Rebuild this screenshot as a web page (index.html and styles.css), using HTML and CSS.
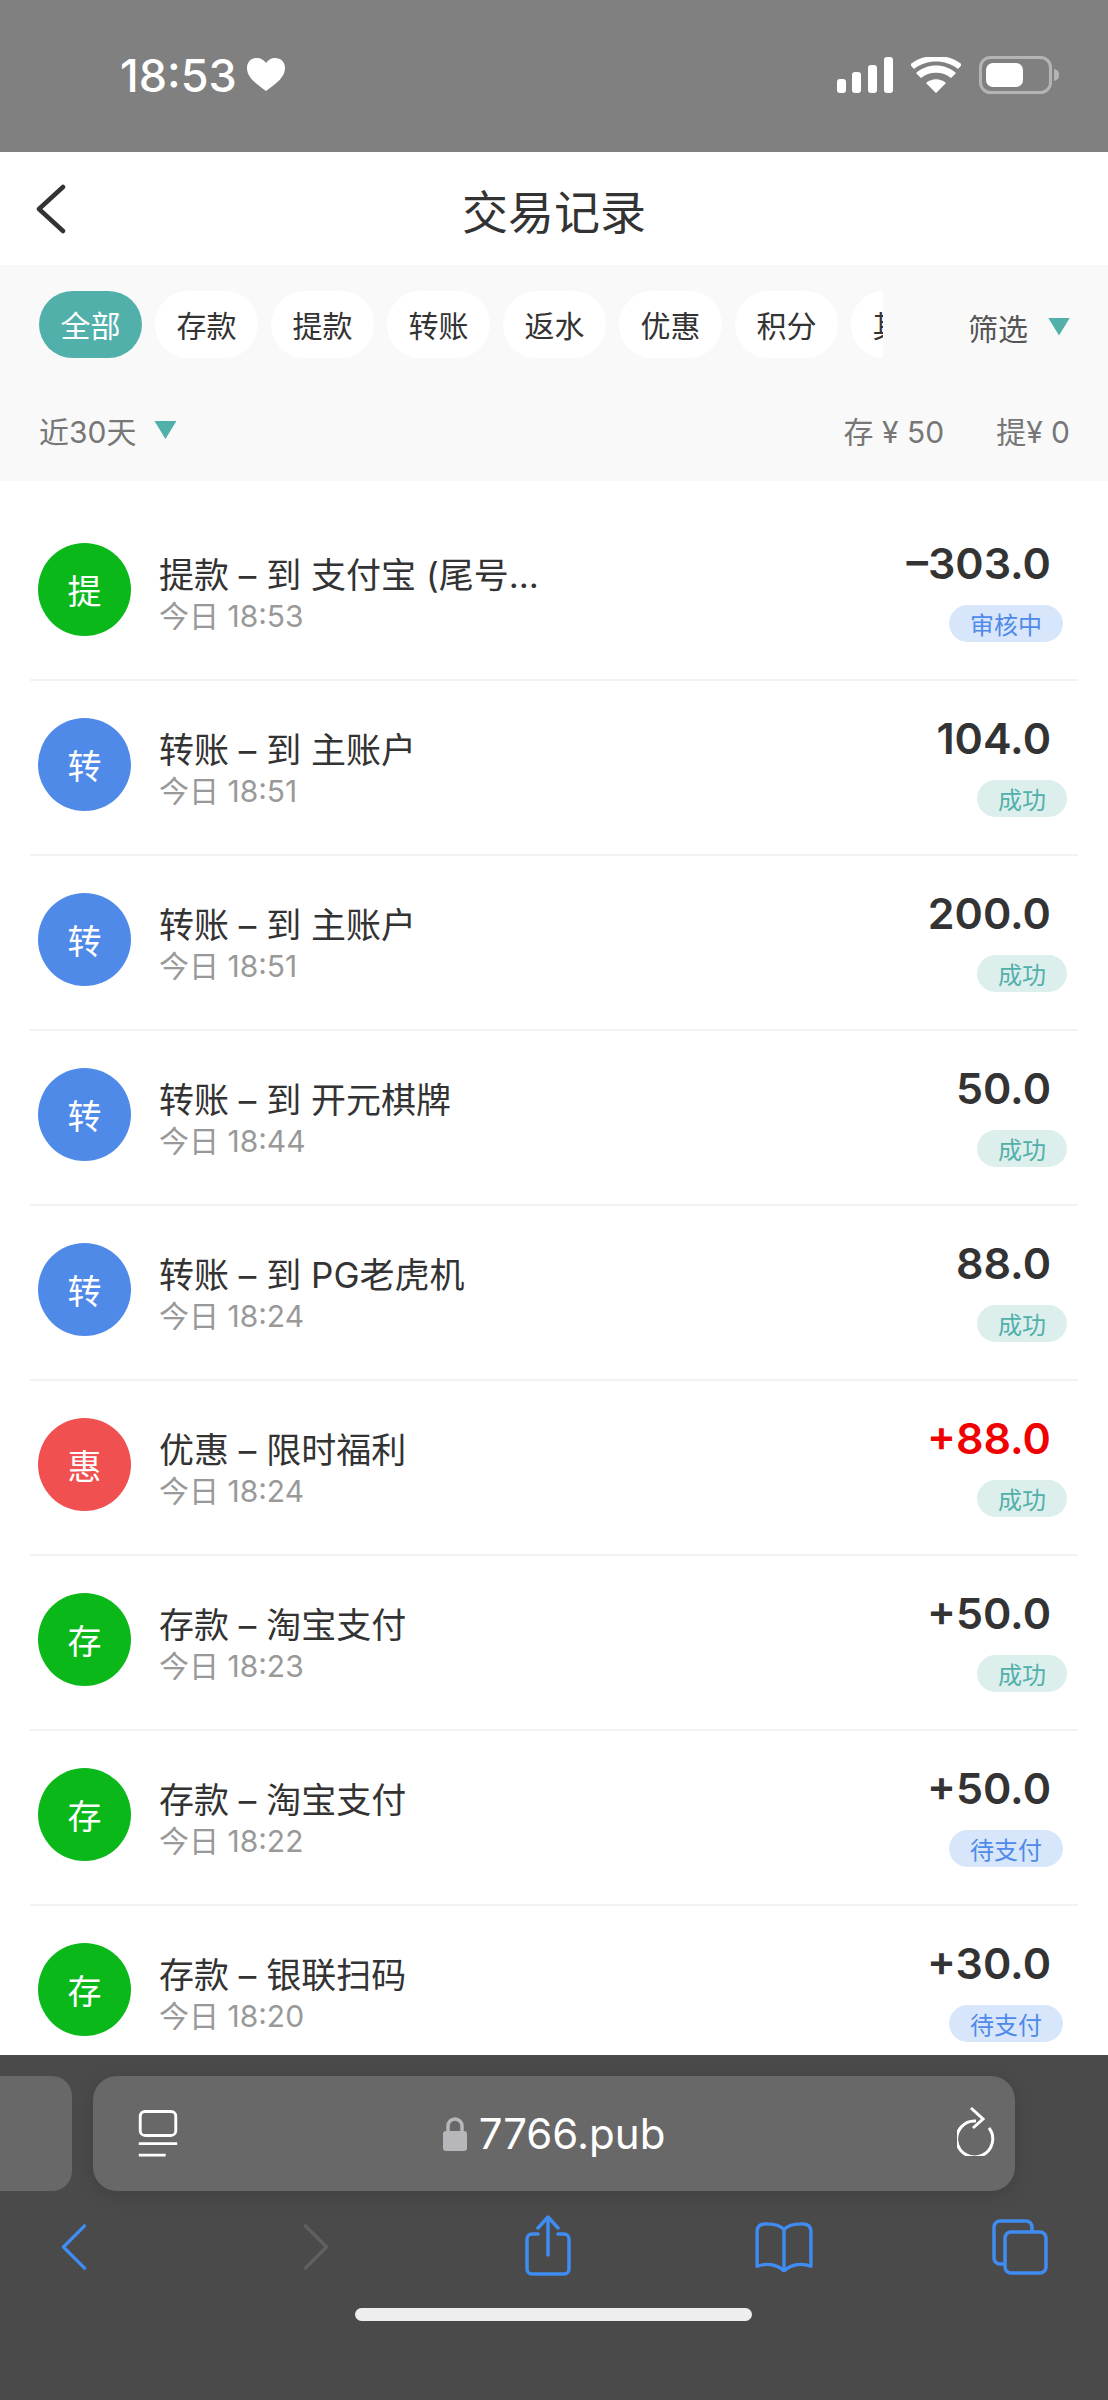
FILE: index.html
```html
<!DOCTYPE html>
<html lang="zh-CN">
<head>
<meta charset="utf-8">
<title>交易记录</title>
<link rel="stylesheet" href="styles.css">
</head>
<body>
<div class="screen">
  <header class="status">
    <div class="clock"><span>18:53</span>
      <svg class="heart" viewBox="0 0 38 34"><path d="M19 33C8 25 0 19 0 10 0 4 4 0 10 0c4 0 7 2 9 5 2-3 5-5 9-5 6 0 10 4 10 10 0 9-8 15-19 23z"/></svg>
    </div>
    <div class="status-icons">
      <svg class="signal" viewBox="0 0 56 36"><rect x="0" y="22" width="9" height="14" rx="3"/><rect x="15" y="15" width="9" height="21" rx="3"/><rect x="31" y="8" width="9" height="28" rx="3"/><rect x="47" y="0" width="9" height="36" rx="3"/></svg>
      <svg class="wifi" viewBox="0 0 50 36"><path d="M25 36 15 26c6-5 14-5 20 0zM10 21 5 16c11-10 29-10 40 0l-5 5c-8-7-22-7-30 0z"/><path d="M3 12-1 7.500C13-4 37-4 51 7.500L47 12C35 2 15 2 3 12z"/></svg>
      <svg class="battery" viewBox="0 0 82 38"><rect x="1.500" y="1.500" width="70" height="35" rx="10" fill="none" stroke="#b4b4b4" stroke-width="3"/><rect x="7" y="7" width="37" height="24" rx="7" fill="#fff"/><path d="M75 13c4 1 5 3 5 6s-1 5-5 6z" fill="#b4b4b4"/></svg>
    </div>
  </header>

  <nav class="title-bar">
    <svg class="back" viewBox="0 0 32 50"><path d="M29 3 5 25l24 22" transform="translate(0 0)"/></svg>
    <h1>交易记录</h1>
  </nav>

  <section class="filters">
    <div class="tab-row">
      <div class="tabs">
        <span class="tab tab-on">全部</span>
        <span class="tab">存款</span>
        <span class="tab">提款</span>
        <span class="tab">转账</span>
        <span class="tab">返水</span>
        <span class="tab">优惠</span>
        <span class="tab">积分</span>
        <span class="tab">其他</span>
      </div>
      <div class="picker"><span>筛选</span><i class="caret"></i></div>
    </div>
    <div class="summary">
      <div class="range"><span>近30天</span><i class="caret"></i></div>
      <div class="totals"><span>存 ¥ 50</span><span>提¥ 0</span></div>
    </div>
  </section>

  <main class="records">
    <article class="row">
      <span class="avatar green">提</span>
      <div class="info"><p class="name">提款 – 到 支付宝 (尾号...</p><p class="when">今日 18:53</p></div>
      <div class="money"><b>–303.0</b><span class="badge wait">审核中</span></div>
    </article>
    <article class="row">
      <span class="avatar blue">转</span>
      <div class="info"><p class="name">转账 – 到 主账户</p><p class="when">今日 18:51</p></div>
      <div class="money"><b>104.0</b><span class="badge ok">成功</span></div>
    </article>
    <article class="row">
      <span class="avatar blue">转</span>
      <div class="info"><p class="name">转账 – 到 主账户</p><p class="when">今日 18:51</p></div>
      <div class="money"><b>200.0</b><span class="badge ok">成功</span></div>
    </article>
    <article class="row">
      <span class="avatar blue">转</span>
      <div class="info"><p class="name">转账 – 到 开元棋牌</p><p class="when">今日 18:44</p></div>
      <div class="money"><b>50.0</b><span class="badge ok">成功</span></div>
    </article>
    <article class="row">
      <span class="avatar blue">转</span>
      <div class="info"><p class="name">转账 – 到 PG老虎机</p><p class="when">今日 18:24</p></div>
      <div class="money"><b>88.0</b><span class="badge ok">成功</span></div>
    </article>
    <article class="row">
      <span class="avatar red">惠</span>
      <div class="info"><p class="name">优惠 – 限时福利</p><p class="when">今日 18:24</p></div>
      <div class="money"><b class="gain">+88.0</b><span class="badge ok">成功</span></div>
    </article>
    <article class="row">
      <span class="avatar green">存</span>
      <div class="info"><p class="name">存款 – 淘宝支付</p><p class="when">今日 18:23</p></div>
      <div class="money"><b>+50.0</b><span class="badge ok">成功</span></div>
    </article>
    <article class="row">
      <span class="avatar green">存</span>
      <div class="info"><p class="name">存款 – 淘宝支付</p><p class="when">今日 18:22</p></div>
      <div class="money"><b>+50.0</b><span class="badge wait">待支付</span></div>
    </article>
    <article class="row">
      <span class="avatar green">存</span>
      <div class="info"><p class="name">存款 – 银联扫码</p><p class="when">今日 18:20</p></div>
      <div class="money"><b>+30.0</b><span class="badge wait">待支付</span></div>
    </article>
  </main>

  <footer class="browser">
    <div class="url-row">
      <div class="prev-tab"></div>
      <div class="url-bar">
        <svg class="reader" viewBox="0 0 40 50"><rect x="1.500" y="1.500" width="37" height="25" rx="5"/><path d="M0 35h40M0 47h28"/></svg>
        <div class="address">
          <svg class="lock" viewBox="0 0 24 34"><path class="lock-body" d="M3 14h18a3 3 0 0 1 3 3v14a3 3 0 0 1-3 3H3a3 3 0 0 1-3-3V17a3 3 0 0 1 3-3z"/><path class="lock-arc" d="M5 15V9a7 7 0 0 1 14 0v6"/></svg>
          <span>7766.pub</span>
        </div>
        <svg class="reload" viewBox="0 0 40 50"><path d="M32 22a18 18 0 1 1-13-7"/><path d="M14 2l12 11-10 9"/></svg>
      </div>
    </div>
    <div class="tools">
      <svg class="tool t-back" viewBox="0 0 28 50"><path d="M25 3 3 25l0 0 22 22"/></svg>
      <svg class="tool t-next" viewBox="0 0 28 50"><path d="M3 3l22 22L3 47"/></svg>
      <svg class="tool t-share" viewBox="0 0 48 62"><path d="M14 19H8a5 5 0 0 0-5 5v30a5 5 0 0 0 5 5h32a5 5 0 0 0 5-5V24a5 5 0 0 0-5-5h-6"/><path d="M24 40V3M14 13 24 2l10 11"/></svg>
      <svg class="tool t-book" viewBox="0 0 62 52"><path d="M31 8C27 3 20 2 12 2 6 2 3 5 3 10v36c8-3 20-3 28 5 8-8 20-8 28-5V10c0-5-3-8-9-8-8 0-15 1-19 6zM31 8v43"/></svg>
      <svg class="tool t-tabs" viewBox="0 0 58 58"><path d="M12 46H9a6 6 0 0 1-6-6V9a6 6 0 0 1 6-6h26a6 6 0 0 1 6 6v4"/><rect x="14" y="14" width="41" height="41" rx="6"/></svg>
    </div>
    <div class="home-bar"></div>
  </footer>
</div>
</body>
</html>
```
FILE: styles.css
```css
* { box-sizing: border-box; }
html, body { margin: 0; padding: 0; }
body {
  width: 1108px;
  height: 2400px;
  overflow: hidden;
  background: #fff;
  font-family: "Noto Sans CJK SC", "Noto Sans", sans-serif;
  color: #333;
}
p, h1 { margin: 0; font-weight: 400; }
.screen { width: 1108px; height: 2400px; display: flex; flex-direction: column; overflow: hidden; }

/* status bar */
.status {
  flex: none;
  height: 152px;
  background: #808080;
  display: flex;
  justify-content: space-between;
  align-items: flex-start;
  padding: 52px 47px 0 120px;
  color: #fff;
}
.clock { display: flex; align-items: center; gap: 10px; font: 500 45px/1 Inter, sans-serif; height: 46px; }
.heart { width: 38px; height: 34px; fill: #fff; }
.status-icons { display: flex; align-items: center; gap: 18px; height: 46px; }
.signal { width: 56px; height: 36px; fill: #fff; }
.wifi { width: 50px; height: 36px; fill: #fff; }
.battery { width: 82px; height: 38px; }

/* page title */
.title-bar {
  flex: none;
  height: 113px;
  display: flex;
  align-items: center;
  justify-content: center;
  position: relative;
}
.title-bar h1 { font-size: 46px; line-height: 1; color: #333; }
.back { position: absolute; left: 34px; top: 32px; width: 32px; height: 50px; fill: none; stroke: #333; stroke-width: 4.500; stroke-linecap: round; stroke-linejoin: round; }

/* filters */
.filters { flex: none; height: 216px; background: #f9f9f9; padding: 26px 38px 0 39px; }
.tab-row { display: flex; justify-content: space-between; height: 67px; }
.tabs { width: 844px; display: flex; gap: 13px; overflow: hidden; }
.tab {
  flex: none;
  width: 103px;
  height: 67px;
  border-radius: 34px;
  background: #fff;
  font-size: 30px;
  line-height: 67px;
  text-align: center;
  color: #333;
}
.tab-on { background: #52b0ab; color: #fff; }
.picker { display: flex; align-items: center; gap: 20px; font-size: 30px; color: #555; padding-top: 4px; }
.caret {
  display: block;
  width: 22px;
  height: 18px;
  background: #52b0ab;
  clip-path: polygon(0 0, 100% 0, 50% 100%);
}
.summary { display: flex; justify-content: space-between; align-items: center; margin-top: 41px; height: 62px; font-size: 30px; color: #777; }
.range { display: flex; align-items: center; gap: 18px; }
.totals { display: flex; gap: 52px; font-family: Inter, "Noto Sans CJK SC", sans-serif; }
.range span { font-family: Inter, "Noto Sans CJK SC", sans-serif; }

/* transaction list */
.records { flex: 1; min-height: 0; overflow: hidden; padding: 25px 30px 0; }
.row {
  height: 175px;
  border-bottom: 2px solid #f2f2f2;
  display: flex;
  align-items: flex-start;
  padding: 37px 0 0 8px;
}
.avatar {
  flex: none;
  width: 93px;
  height: 93px;
  border-radius: 50%;
  color: #fff;
  font-size: 34px;
  line-height: 93px;
  text-align: center;
}
.green { background: #0bb81a; }
.blue { background: #4f8ae8; }
.red { background: #f05050; }
.info { flex: 1; min-width: 0; margin-left: 28px; padding-top: 9px; }
.name { font-family: Inter, "Noto Sans CJK SC", sans-serif; font-size: 35px; line-height: 46px; color: #333; white-space: nowrap; }
.when { font-family: Inter, "Noto Sans CJK SC", sans-serif; font-size: 30px; line-height: 36px; color: #999; }
.money { flex: none; display: flex; flex-direction: column; align-items: flex-end; padding-right: 27px; }
.money b { font: 600 43px/44px Inter, sans-serif; color: #333; height: 44px; margin-top: -2px; }
.money .gain { color: #f00000; }
.badge { height: 37px; border-radius: 19px; font-size: 24px; line-height: 37px; padding: 0 21px; margin-top: 20px; }
.wait { background: #d8e6fb; color: #4f8ae8; margin-right: -12px; }
.ok { background: #dcefec; color: #52b0ab; margin-right: -16px; }

/* browser chrome */
.browser { flex: none; height: 345px; background: #4a4a4a; overflow: hidden; }
.url-row { display: flex; gap: 21px; margin-top: 21px; height: 115px; margin-left: -40px; }
.prev-tab { flex: none; width: 112px; background: #686868; border-radius: 20px; }
.url-bar {
  flex: none;
  width: 922px;
  background: #686868;
  border-radius: 24px;
  box-shadow: 0 4px 18px rgba(0, 0, 0, .12);
  position: relative;
  display: flex;
  align-items: center;
  justify-content: center;
}
.reader { position: absolute; left: 45px; top: 34px; width: 40px; height: 48px; fill: none; stroke: #fff; stroke-width: 3; }
.address { display: flex; align-items: center; gap: 12px; color: #fff; font: 400 42px/1 Inter, sans-serif; }
.lock { width: 24px; height: 34px; }
.lock-body { fill: #b6b6bb; }
.lock-arc { fill: none; stroke: #b6b6bb; stroke-width: 3.500; }
.reload { position: absolute; right: 18px; top: 30px; width: 40px; height: 50px; fill: none; stroke: #fff; stroke-width: 3; }
.tools { height: 90px; position: relative; }
.tool { position: absolute; fill: none; stroke: #3f8cf2; stroke-width: 3.500; stroke-linecap: round; stroke-linejoin: round; }
.t-back { left: 60px; top: 32px; width: 28px; height: 48px; }
.t-next { left: 302px; top: 32px; width: 28px; height: 48px; stroke: #606060; }
.t-share { left: 524px; top: 24px; width: 48px; height: 62px; }
.t-book { left: 754px; top: 31px; width: 60px; height: 50px; }
.t-tabs { left: 991px; top: 27px; width: 58px; height: 58px; }
.home-bar { width: 397px; height: 13px; border-radius: 7px; background: #eee; margin: 27px auto 0 355px; }
```
